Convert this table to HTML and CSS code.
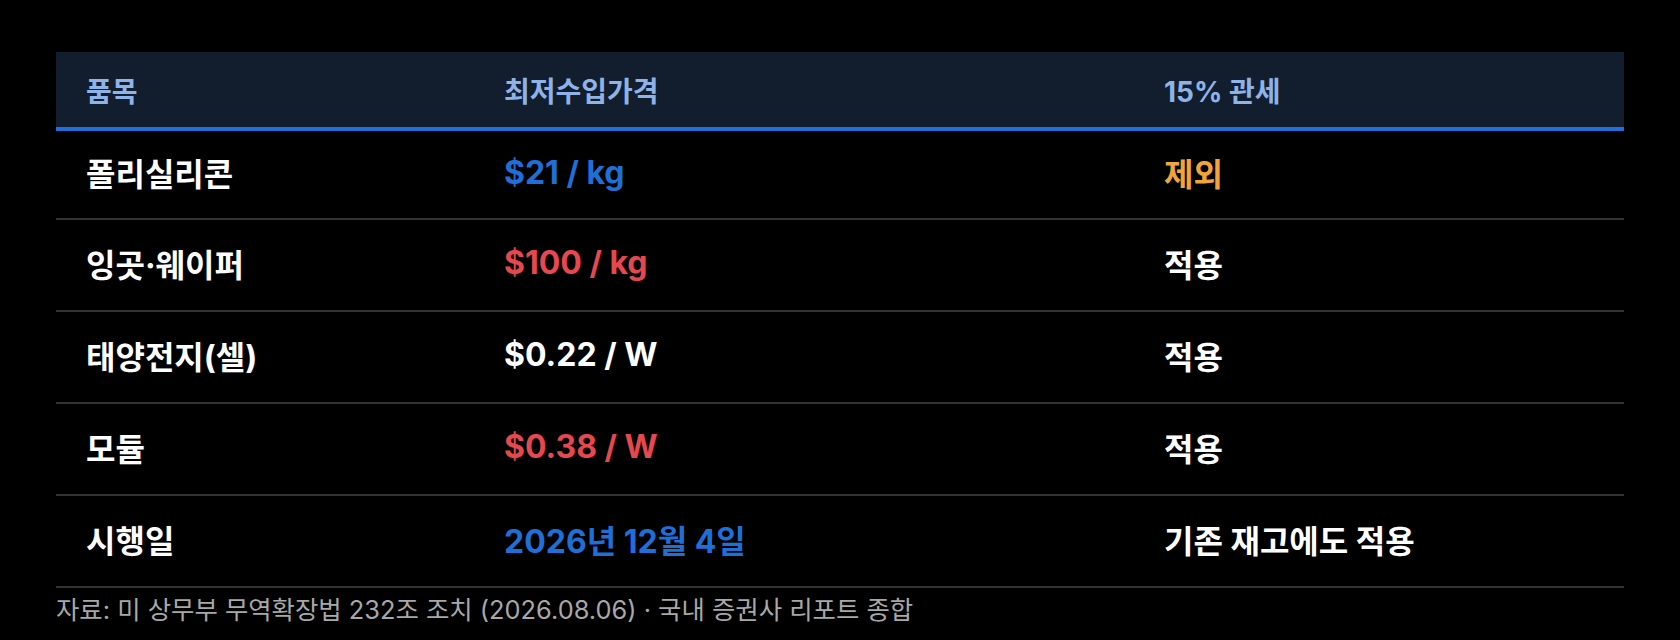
FILE: index.html
```html
<!DOCTYPE html>
<html lang="ko">
<head>
<meta charset="utf-8">
<link rel="stylesheet" href="styles.css">
</head>
<body>
<div class="wrap">
  <table class="tariff">
    <colgroup>
      <col class="c1"><col class="c2"><col class="c3">
    </colgroup>
    <thead>
      <tr><th>품목</th><th>최저수입가격</th><th>15% 관세</th></tr>
    </thead>
    <tbody>
      <tr><td>폴리실리콘</td><td class="blue">$21 / kg</td><td class="orange">제외</td></tr>
      <tr><td>잉곳·웨이퍼</td><td class="red">$100 / kg</td><td>적용</td></tr>
      <tr><td>태양전지(셀)</td><td>$0.22 / W</td><td>적용</td></tr>
      <tr><td>모듈</td><td class="red">$0.38 / W</td><td>적용</td></tr>
      <tr><td>시행일</td><td class="blue">2026년 12월 4일</td><td>기존 재고에도 적용</td></tr>
    </tbody>
  </table>
  <p class="source">자료: 미 상무부 무역확장법 232조 조치 (2026.08.06) · 국내 증권사 리포트 종합</p>
</div>
</body>
</html>
```

FILE: styles.css
```css
html, body {
  margin: 0;
  padding: 0;
  background: #000;
}
body {
  font-family: "Inter", "Noto Sans CJK KR", sans-serif;
  color: #fff;
}
.wrap {
  padding: 52px 56px 0 56px;
}
.tariff {
  width: 100%;
  border-collapse: collapse;
  table-layout: fixed;
}
.c1 { width: 418px; }
.c2 { width: 660px; }
.c3 { width: auto; }
.tariff th {
  background: #121d2e;
  color: #8db3e8;
  font-size: 28px;
  font-weight: 700;
  text-align: left;
  height: 77px;
  padding: 0 0 0 30px;
  border-bottom: 4px solid #1f6fd8;
  box-sizing: border-box;
}
.tariff td {
  font-size: 32px;
  font-weight: 700;
  text-align: left;
  height: 92px;
  padding: 0 0 5px 30px;
  border-bottom: 2px solid #333;
  box-sizing: border-box;
}
.tariff tbody tr:first-child td { height: 90px; }
.blue { color: #1f6fd8; }
.red { color: #e5484d; }
.orange { color: #f0a43a; }
.source {
  margin: 4px 0 0 0;
  font-size: 25.4px;
  line-height: 1.4;
  color: #a8a8a8;
}
```
